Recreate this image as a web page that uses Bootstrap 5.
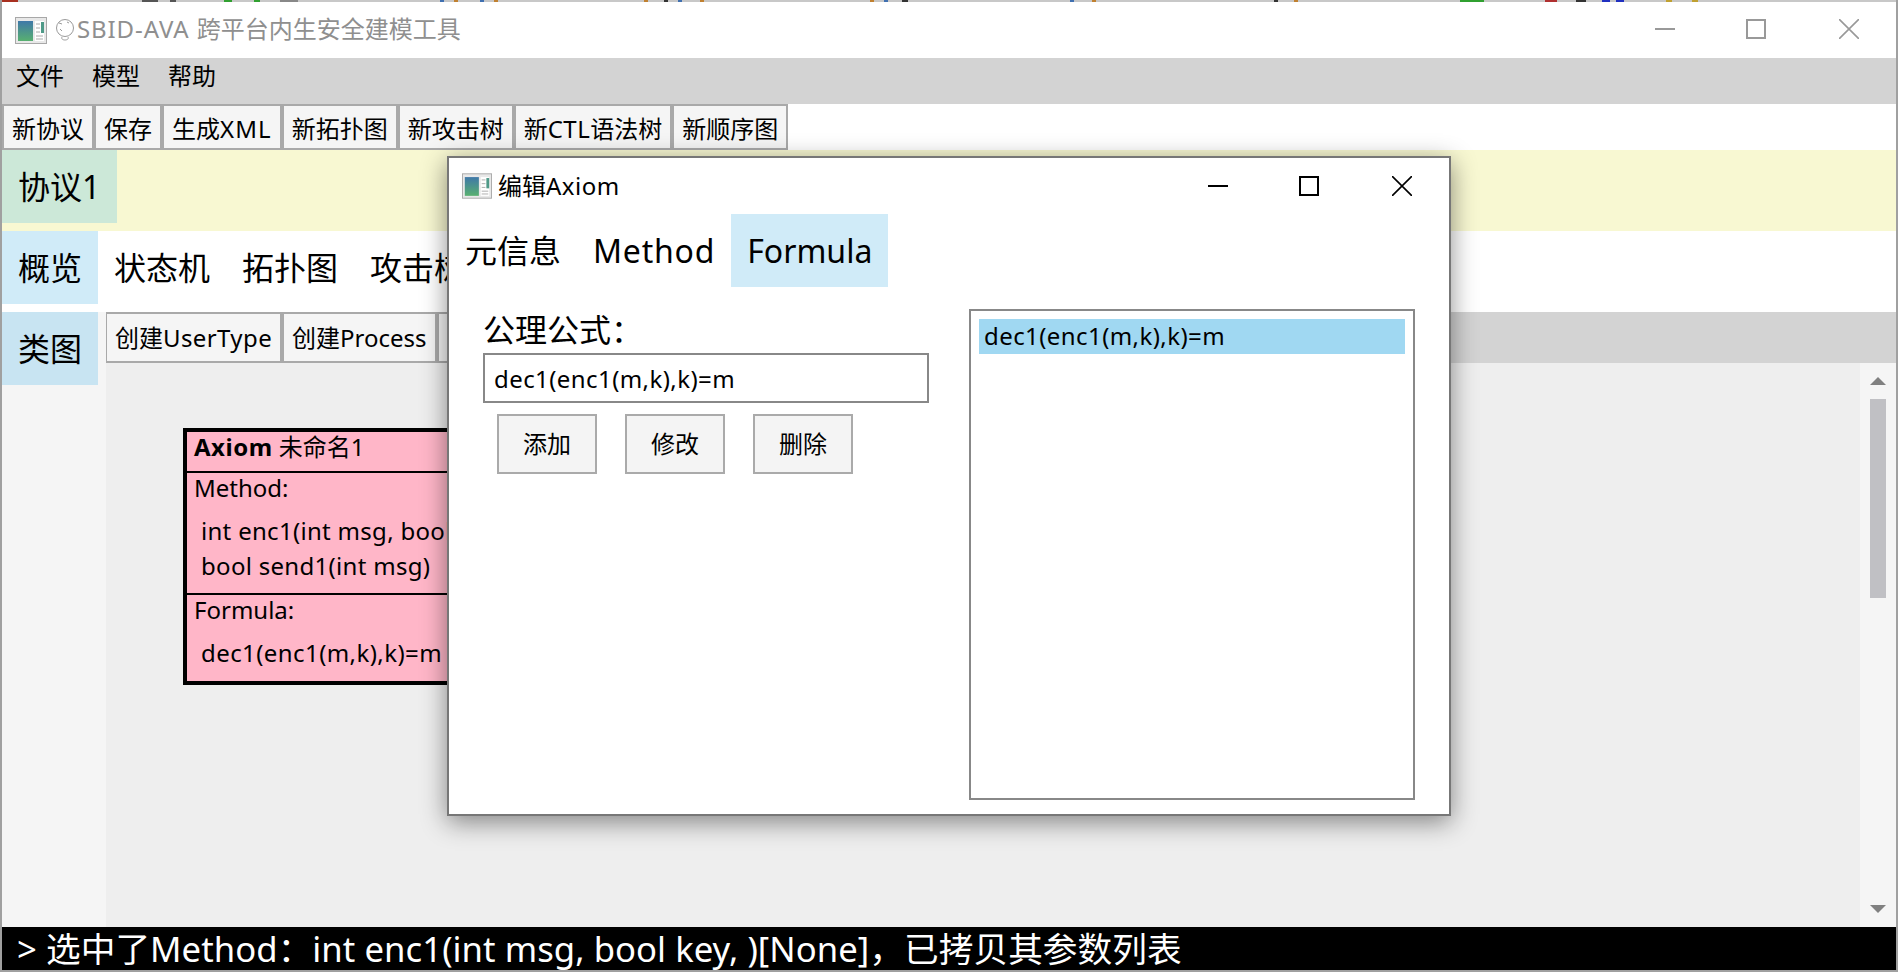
<!DOCTYPE html>
<html lang="zh">
<head>
  <meta charset="UTF-8">
  <title>SBID-AVA</title>
  <link href="https://cdn.jsdelivr.net/npm/bootstrap@5.3.0/dist/css/bootstrap.min.css" rel="stylesheet">
  <style>
    html, body { margin: 0; height: 972px; overflow: hidden; background: #fff; }
    body { font-family: "Noto Sans", "Noto Sans CJK SC", sans-serif; font-size: 24px; color: #000; }
    .app-frame { position: relative; width: 1898px; height: 972px; border-left: 2px solid #a0a0a0; border-right: 2px solid #a0a0a0; border-bottom: 2px solid #a0a0a0; }
    /* bits of the desktop that show above the window */
    .desk-strip { height: 2px; background: linear-gradient(90deg,
      #a83020 0 16px, #c8c8c8 16px 140px, #555 140px 156px, #c8c8c8 156px 168px, #555 168px 174px, #c8c8c8 174px 222px,
      #30a030 222px 230px, #c8c8c8 230px 252px, #30a030 252px 258px, #c8c8c8 258px 278px, #888 278px 296px, #c8c8c8 296px 438px,
      #4070b0 438px 442px, #c8c8c8 442px 452px, #c08030 452px 456px, #c8c8c8 456px 478px, #4070b0 478px 482px, #c8c8c8 482px 492px, #c08030 492px 496px, #c8c8c8 496px 642px,
      #c08030 642px 646px, #c8c8c8 646px 662px, #333 662px 666px, #c8c8c8 666px 676px, #4070b0 676px 680px, #c8c8c8 680px 698px, #c08030 698px 702px, #c8c8c8 702px 868px,
      #c08030 868px 872px, #c8c8c8 872px 882px, #4070b0 882px 886px, #c8c8c8 886px 900px, #333 900px 906px, #c8c8c8 906px 1068px,
      #4070b0 1068px 1072px, #c8c8c8 1072px 1090px, #c08030 1090px 1094px, #c8c8c8 1094px 1272px, #333 1272px 1276px, #c8c8c8 1276px 1292px, #c08030 1292px 1296px, #c8c8c8 1296px 1458px,
      #30a030 1458px 1482px, #c8c8c8 1482px 1543px, #b03030 1543px 1555px, #c8c8c8 1555px 1574px, #333 1574px 1584px, #c8c8c8 1584px 1600px, #2030c0 1600px 1608px, #c8c8c8 1608px 1614px, #2030c0 1614px 1622px, #c8c8c8 1622px 1664px, #c0a030 1664px 1670px, #c8c8c8 1670px 1690px, #c0a030 1690px 1696px, #c8c8c8 1696px); }
    .title-row { height: 56px; padding-left: 13px; }
    .app-title { font-size: 24px; line-height: 1; color: #8f8f8f; margin-left: 1px; margin-bottom: 2px; white-space: nowrap; }
    .space-brand { letter-spacing: .9px; }
    .ctl-box { margin-bottom: 2px; }
    .ctl-max { margin-left: 71px; }
    .ctl-close { margin-left: 73px; margin-right: 37px; }
    .menu-row { height: 46px; background: #d3d3d3; }
    .menu-entry { padding: 0 14px; line-height: 36px; }
    .tool-row { height: 46px; }
    .tool-btn { height: 46px; padding: 3px 8px 0; border: 2px solid #a9a9a9; background: #f5f5f5; border-radius: 0; font-size: 24px; line-height: 1; color: #000; white-space: nowrap; }
    .space-xml { letter-spacing: 1.1px; }
    .space-ctl { letter-spacing: .45px; }
    .space-user { letter-spacing: .4px; }
    .space-formula { letter-spacing: .42px; }
    .space-sig { letter-spacing: .3px; }
    .space-method { letter-spacing: .8px; }
    .space-axiom { letter-spacing: .5px; }
    .proto-row { height: 81px; background: #f8f8d2; }
    .big-tab { height: 73px; padding: 0 16px; font-size: 32px; line-height: 73px; white-space: nowrap; }
    .tab-green { background: #cce8d8; width: 115px; }
    .tab-blue { background: #d0ebf8; }
    .tab-blue-dark { background: #c8e4f2; width: 96px; }
    .view-row { height: 81px; }
    .class-row { min-height: 0; }
    .side-col { width: 104px; background: #f5f5f5; }
    .class-tools { height: 51px; background: #d3d3d3; }
    .class-tools .tool-btn { height: 51px; padding-top: 0; }
    .class-tools .tool-btn:first-child { border-left-width: 1px; }
    .paint-area { position: relative; background: #eee; overflow: hidden; }
    .scroll-col { width: 36px; background: #f5f5f5; }
    .scroll-thumb { position: absolute; left: 10px; top: 36px; width: 16px; height: 199px; background: #c0c0c4; }
    .scroll-up, .scroll-down { position: absolute; left: 10px; width: 0; height: 0; border-left: 8px solid transparent; border-right: 8px solid transparent; }
    .scroll-up { top: 14px; border-bottom: 8px solid #808080; }
    .scroll-down { bottom: 14px; border-top: 8px solid #808080; }
    .axiom-node { position: absolute; left: 77px; top: 65px; width: 420px; height: 257px; border: 4px solid #000; background: #ffb6c8; }
    .axiom-part { padding-left: 7px; border-bottom: 2px solid #000; }
    .axiom-part:last-child { border-bottom: 0; }
    .axiom-head { height: 41px; line-height: 30px; }
    .axiom-methods { height: 122px; }
    .axiom-line { padding-left: 7px; line-height: 35px; white-space: nowrap; }
    .axiom-cap { line-height: 30px; margin-bottom: 10px; }
    .status-row { height: 43px; background: #000; color: #fff; font-size: 34.67px; letter-spacing: .06px; line-height: 44px; padding-left: 15px; white-space: nowrap; }
    .edit-dialog { position: absolute; left: 445px; top: 156px; width: 1004px; height: 660px; background: #fff; border: 2px solid #777; box-shadow: 0 6px 24px rgba(0, 0, 0, .45); }
    .edit-title { height: 56px; padding-left: 13px; }
    .edit-title-text { margin-left: 6px; line-height: 1; }
    .edit-tabs { height: 73px; }
    .edit-body { padding: 22px 0 0 34px; }
    .formula-col { width: 446px; }
    .formula-label { height: 44px; font-size: 32px; line-height: 41px; }
    .formula-input { height: 50px; border: 2px solid #888; border-radius: 0; padding: 0 9px; font-size: 24px; line-height: 1; color: #000; }
    .formula-btns { margin: 11px 0 0 14px; gap: 28px; }
    .formula-btn { width: 100px; height: 60px; padding: 0; border: 2px solid #aaa; border-radius: 0; background: #f4f4f4; font-size: 24px; color: #000; }
    .formula-list { width: 446px; height: 491px; margin-left: 40px; border: 2px solid #888; padding: 8px; }
    .formula-item { height: 35px; padding-left: 5px; background: #a0d8f2; line-height: 33px; }
  </style>
</head>
<body>
  <div class="app-frame d-flex flex-column">
    <div class="desk-strip"></div>

    <div class="title-row d-flex align-items-center">
      <svg width="32" height="27" viewBox="0 0 32 27">
        <rect x=".5" y=".5" width="31" height="26" fill="#e8e8e8" stroke="#a8a8a8"/>
        <defs><linearGradient id="panelA" x1="0" y1="0" x2="0" y2="1"><stop offset="0" stop-color="#3f78a8"/><stop offset="1" stop-color="#58b070"/></linearGradient></defs>
        <rect x="3" y="4" width="15" height="20" fill="url(#panelA)"/>
        <rect x="20" y="4" width="9" height="20" fill="#fff"/>
        <rect x="26" y="5" width="3" height="11" fill="#4f9a88"/>
        <path d="M21 7h4M21 11h4M21 15h4M21 19h7M21 22h7" stroke="#aaa"/>
      </svg>
      <svg class="ms-2" width="21" height="24" viewBox="0 0 21 24" fill="none" stroke="#9a9a9a">
        <circle cx="10" cy="10" r="8.5"/>
        <path d="M4 5l3 1M12 4l2 1M5 11l2 2M7 19c-1 2 1 3 3 3s4-1 3-3"/>
      </svg>
      <span class="app-title"><span class="space-brand">SBID-AVA </span>跨平台内生安全建模工具</span>
      <div class="ms-auto d-flex align-items-center ctl-box">
        <svg width="20" height="20" viewBox="0 0 20 20"><path d="M0 10h20" stroke="#999" stroke-width="2"/></svg>
        <svg class="ctl-max" width="20" height="20" viewBox="0 0 20 20"><rect x="1" y="1" width="18" height="18" fill="none" stroke="#999" stroke-width="2"/></svg>
        <svg class="ctl-close" width="20" height="20" viewBox="0 0 20 20"><path d="M0 0l20 20M20 0L0 20" stroke="#999" stroke-width="1.6"/></svg>
      </div>
    </div>

    <div class="menu-row d-flex">
      <span class="menu-entry">文件</span>
      <span class="menu-entry">模型</span>
      <span class="menu-entry">帮助</span>
    </div>

    <div class="tool-row d-flex">
      <button class="btn tool-btn">新协议</button>
      <button class="btn tool-btn">保存</button>
      <button class="btn tool-btn">生成<span class="space-xml">XML</span></button>
      <button class="btn tool-btn">新拓扑图</button>
      <button class="btn tool-btn">新攻击树</button>
      <button class="btn tool-btn">新<span class="space-ctl">CTL</span>语法树</button>
      <button class="btn tool-btn">新顺序图</button>
    </div>

    <div class="proto-row d-flex align-items-start">
      <div class="big-tab tab-green">协议1</div>
    </div>

    <div class="view-row d-flex align-items-start">
      <div class="big-tab tab-blue">概览</div>
      <div class="big-tab">状态机</div>
      <div class="big-tab">拓扑图</div>
      <div class="big-tab">攻击树</div>
    </div>

    <div class="class-row d-flex flex-grow-1">
      <div class="side-col flex-shrink-0">
        <div class="big-tab tab-blue-dark">类图</div>
      </div>
      <div class="d-flex flex-column flex-grow-1">
        <div class="class-tools d-flex">
          <button class="btn tool-btn">创建<span class="space-user">UserType</span></button>
          <button class="btn tool-btn">创建Process</button>
          <button class="btn tool-btn">创建Axiom</button>
        </div>
        <div class="d-flex flex-grow-1">
          <div class="paint-area flex-grow-1">
            <div class="axiom-node">
              <div class="axiom-part axiom-head"><b class="space-axiom">Axiom</b> 未命名1</div>
              <div class="axiom-part axiom-methods">
                <div class="axiom-cap">Method:</div>
                <div class="axiom-line space-sig">int enc1(int msg, bool key, )</div>
                <div class="axiom-line space-sig">bool send1(int msg)</div>
              </div>
              <div class="axiom-part">
                <div class="axiom-cap">Formula:</div>
                <div class="axiom-line space-formula">dec1(enc1(m,k),k)=m</div>
              </div>
            </div>
          </div>
          <div class="scroll-col position-relative flex-shrink-0">
            <div class="scroll-up"></div>
            <div class="scroll-thumb"></div>
            <div class="scroll-down"></div>
          </div>
        </div>
      </div>
    </div>

    <div class="status-row">&gt; 选中了Method：int enc1(int msg, bool key, )[None]，已拷贝其参数列表</div>

    <div class="edit-dialog d-flex flex-column">
      <div class="edit-title d-flex align-items-center">
        <svg width="30" height="26" viewBox="0 0 32 27">
          <rect x=".5" y=".5" width="31" height="26" fill="#e8e8e8" stroke="#a8a8a8"/>
          <rect x="3" y="4" width="15" height="20" fill="url(#panelA)"/>
          <rect x="20" y="4" width="9" height="20" fill="#fff"/>
          <rect x="26" y="5" width="3" height="11" fill="#4f9a88"/>
          <path d="M21 7h4M21 11h4M21 15h4M21 19h7M21 22h7" stroke="#aaa"/>
        </svg>
        <span class="edit-title-text">编辑<span class="space-axiom">Axiom</span></span>
        <div class="ms-auto d-flex align-items-center">
          <svg width="20" height="20" viewBox="0 0 20 20"><path d="M0 10h20" stroke="#000" stroke-width="2"/></svg>
          <svg class="ctl-max" width="20" height="20" viewBox="0 0 20 20"><rect x="1" y="1" width="18" height="18" fill="none" stroke="#000" stroke-width="2"/></svg>
          <svg class="ctl-close" width="20" height="20" viewBox="0 0 20 20"><path d="M0 0l20 20M20 0L0 20" stroke="#000" stroke-width="1.6"/></svg>
        </div>
      </div>
      <div class="edit-tabs d-flex">
        <div class="big-tab">元信息</div>
        <div class="big-tab"><span class="space-method">Method</span></div>
        <div class="big-tab tab-blue">Formula</div>
      </div>
      <div class="edit-body d-flex">
        <div class="formula-col">
          <div class="formula-label">公理公式：</div>
          <input class="form-control formula-input space-formula" type="text" value="dec1(enc1(m,k),k)=m">
          <div class="formula-btns d-flex">
            <button class="btn formula-btn">添加</button>
            <button class="btn formula-btn">修改</button>
            <button class="btn formula-btn">删除</button>
          </div>
        </div>
        <div class="formula-list">
          <div class="formula-item space-formula">dec1(enc1(m,k),k)=m</div>
        </div>
      </div>
    </div>
  </div>
  <script src="https://cdn.jsdelivr.net/npm/bootstrap@5.3.0/dist/js/bootstrap.bundle.min.js"></script>
</body>
</html>
